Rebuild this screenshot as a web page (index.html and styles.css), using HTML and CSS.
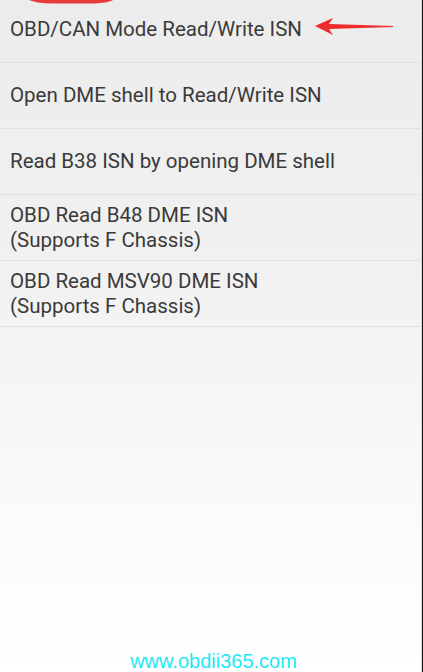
FILE: index.html
```html
<!DOCTYPE html>
<html>
<head>
<meta charset="utf-8">
<link rel="stylesheet" href="styles.css">
</head>
<body>
<div class="screen">
  <svg class="mark-top" width="84" height="6" viewBox="0 0 84 6">
    <path d="M0 0 L84 0 Q80 3 60 3.6 L24 3.6 Q6 3 0 0 Z" fill="#e83a3a"/>
  </svg>
  <ul class="menu">
    <li class="item first">
      <span class="label">OBD/CAN Mode Read/Write ISN</span>
      <svg class="arrow" width="80" height="18" viewBox="0 0 80 18">
        <path d="M0 8 L18 0 L14 6 L78 8 L78 9 L14 11 L18 17 Z" fill="#ee2a2a"/>
      </svg>
    </li>
    <li class="item"><span class="label">Open DME shell to Read/Write ISN</span></li>
    <li class="item"><span class="label">Read B38 ISN by opening DME shell</span></li>
    <li class="item"><span class="label">OBD Read B48 DME ISN<br>(Supports F Chassis)</span></li>
    <li class="item"><span class="label">OBD Read MSV90 DME ISN<br>(Supports F Chassis)</span></li>
  </ul>
  <div class="spacer"></div>
  <div class="footer">www.obdii365.com</div>
</div>
</body>
</html>
```
FILE: styles.css
```css
html, body {
  margin: 0;
  padding: 0;
}
body {
  width: 423px;
  height: 672px;
  overflow: hidden;
  background: #fff;
}
.screen {
  position: relative;
  width: 422px;
  height: 672px;
  border-right: 1px solid #111;
  display: flex;
  flex-direction: column;
  background: linear-gradient(to bottom, #ececec 0%, #f1f1f1 40%, #fafafa 75%, #ffffff 100%);
  box-shadow: inset -3px 0 0 -2px #dcdcdc;
}
.mark-top {
  position: absolute;
  left: 29px;
  top: 0;
  z-index: 2;
}
.menu {
  list-style: none;
  margin: -3px 0 0 0;
  padding: 0;
}
.item {
  display: flex;
  align-items: center;
  padding-left: 10px;
  border-bottom: 1px solid #e1e1e1;
  box-sizing: border-box;
  height: 66px;
}
.label {
  font-family: Roboto, "Noto Sans", sans-serif;
  font-size: 20.5px;
  line-height: 25px;
  color: #3a3a3a;
}
.first {
  position: relative;
}
.arrow {
  position: absolute;
  left: 315px;
  top: 21px;
}
.spacer {
  flex: 1;
}
.footer {
  font-family: "Liberation Sans", Arial, sans-serif;
  font-size: 20px;
  color: #22e8f4;
  text-align: center;
  padding-left: 5px;
  height: 22px;
  line-height: 22px;
}
```
